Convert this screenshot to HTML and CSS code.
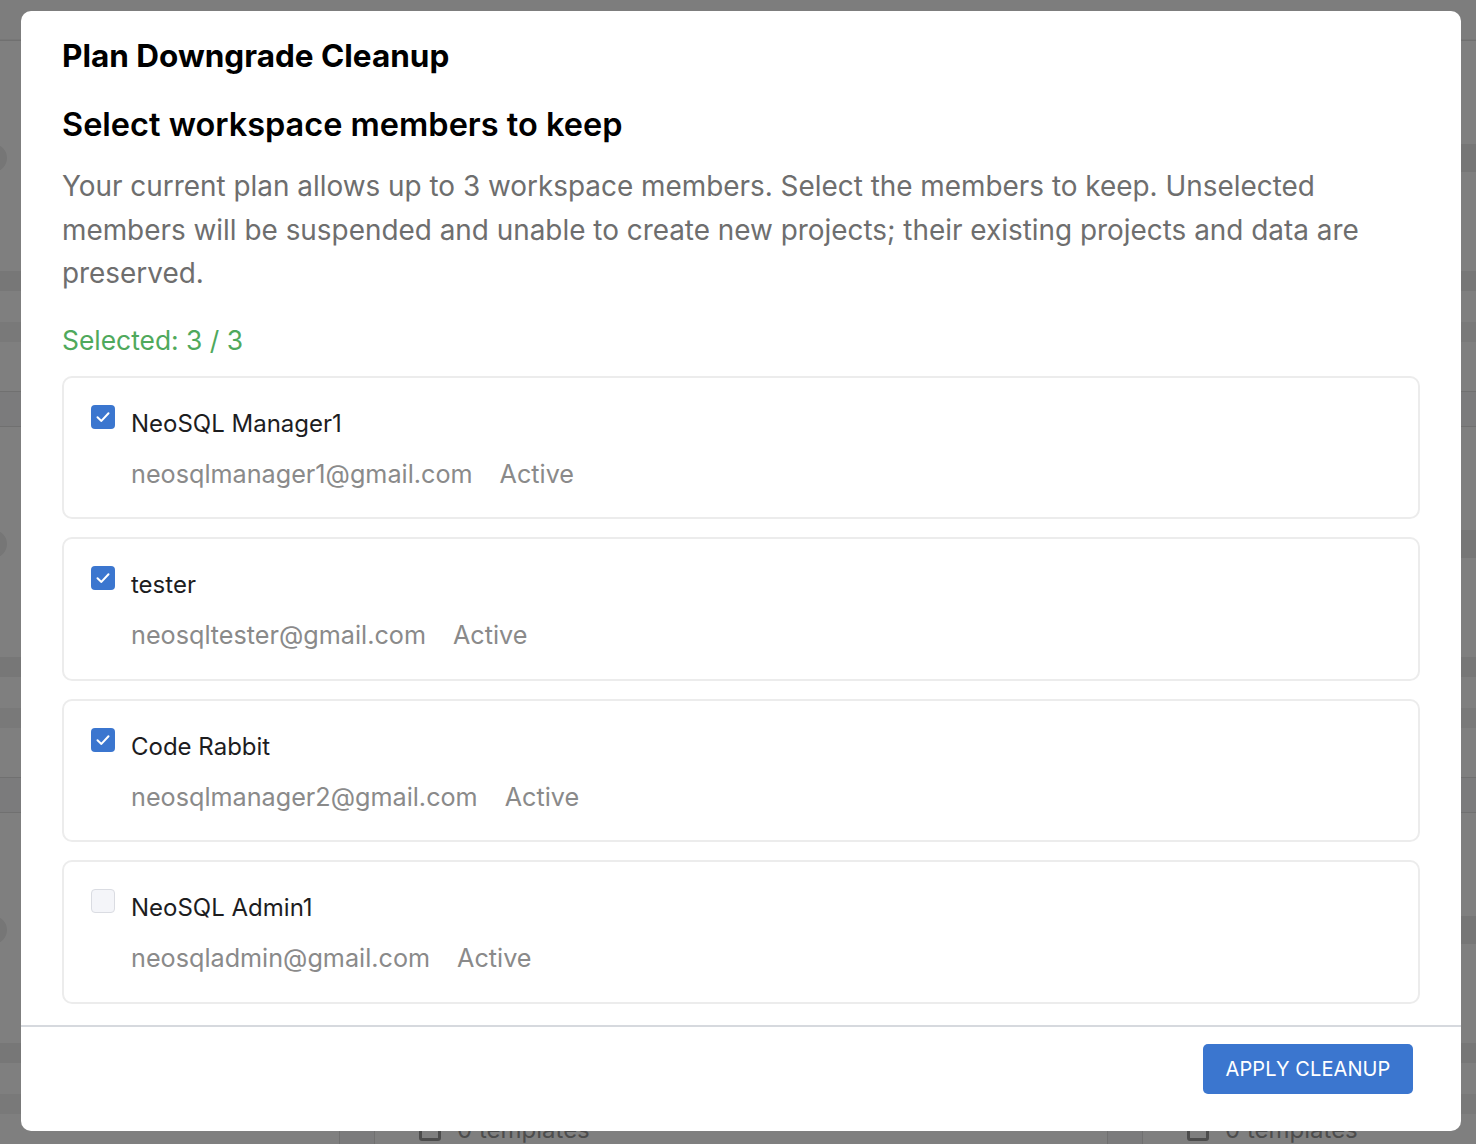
FILE: index.html
```html
<!DOCTYPE html>
<html lang="en">
<head>
    <meta charset="UTF-8">
    <meta name="viewport" content="width=device-width, initial-scale=1.0">
    <title>Plan Downgrade Cleanup</title>
    <link rel="stylesheet" href="styles.css">
</head>
<body>
    <!-- page behind the dialog -->
    <div class="app">
        <div class="app-header"></div>
        <div class="board">
            <div class="board-card"><div class="pill"></div><div class="bar"></div><div class="bar light"></div></div>
            <div class="board-card"><div class="pill"></div><div class="bar"></div><div class="bar light"></div></div>
            <div class="board-card"><div class="pill"></div><div class="bar"></div><div class="bar light"></div></div>
            <div class="board-card"><div class="pill"></div><div class="bar"></div><div class="bar light"></div></div>
            <div class="board-card"><div class="pill"></div><div class="bar"></div><div class="bar light"></div></div>
            <div class="board-card"><div class="pill"></div><div class="bar"></div><div class="bar light"></div></div>
            <div class="board-card"><div class="pill"></div><div class="bar"></div><div class="bar light"></div></div>
            <div class="board-card"><div class="pill"></div><div class="bar"></div><div class="bar light"></div><div class="count"><span class="count-icon"></span>0 templates</div></div>
            <div class="board-card"><div class="pill"></div><div class="bar"></div><div class="bar light"></div><div class="count"><span class="count-icon"></span>0 templates</div></div>
        </div>
    </div>

    <div class="backdrop"></div>

    <div class="modal" role="dialog">
        <div class="modal-body">
            <h1 class="modal-title">Plan Downgrade Cleanup</h1>
            <h2 class="section-title">Select workspace members to keep</h2>
            <p class="hint">Your current plan allows up to 3 workspace members. Select the members to keep. Unselected members will be suspended and unable to create new projects; their existing projects and data are preserved.</p>
            <div class="selected-count">Selected: 3 / 3</div>

            <div class="member-list">
                <label class="member">
                    <span class="check checked">
                        <svg viewBox="0 0 24 24" width="24" height="24"><path d="M6.5 12.3l3.9 3.6 7.1-7.6" fill="none" stroke="#fff" stroke-width="2" stroke-linecap="round" stroke-linejoin="round"/></svg>
                    </span>
                    <span class="member-info">
                        <span class="member-name">NeoSQL Manager1</span>
                        <span class="member-meta"><span>neosqlmanager1@gmail.com</span><span>Active</span></span>
                    </span>
                </label>
                <label class="member">
                    <span class="check checked">
                        <svg viewBox="0 0 24 24" width="24" height="24"><path d="M6.5 12.3l3.9 3.6 7.1-7.6" fill="none" stroke="#fff" stroke-width="2" stroke-linecap="round" stroke-linejoin="round"/></svg>
                    </span>
                    <span class="member-info">
                        <span class="member-name">tester</span>
                        <span class="member-meta"><span>neosqltester@gmail.com</span><span>Active</span></span>
                    </span>
                </label>
                <label class="member">
                    <span class="check checked">
                        <svg viewBox="0 0 24 24" width="24" height="24"><path d="M6.5 12.3l3.9 3.6 7.1-7.6" fill="none" stroke="#fff" stroke-width="2" stroke-linecap="round" stroke-linejoin="round"/></svg>
                    </span>
                    <span class="member-info">
                        <span class="member-name">Code Rabbit</span>
                        <span class="member-meta"><span>neosqlmanager2@gmail.com</span><span>Active</span></span>
                    </span>
                </label>
                <label class="member">
                    <span class="check"></span>
                    <span class="member-info">
                        <span class="member-name">NeoSQL Admin1</span>
                        <span class="member-meta"><span>neosqladmin@gmail.com</span><span>Active</span></span>
                    </span>
                </label>
            </div>
        </div>
        <div class="modal-footer">
            <button class="btn-primary" type="button">Apply Cleanup</button>
        </div>
    </div>
</body>
</html>
```

FILE: styles.css
```css
* {
  box-sizing: border-box;
}

body {
  margin: 0;
  font-family: Inter, "Noto Sans", sans-serif;
  color: #1d1d1f;
  background-color: #fff;
  overflow: hidden;
}

/* background page */
.app {
  height: 1144px;
  overflow: hidden;
}

.app-header {
  height: 40px;
  border-bottom: 1px solid #eee;
  background-color: #fafafa;
}

.board {
  display: grid;
  grid-template-columns: repeat(3, 734px);
  gap: 34px;
  margin-left: -394px;
  background-color: #f7f7f9;
}

.board-card {
  height: 352px;
  background-color: #fff;
  border: 1px solid #e0e0e0;
  padding: 103px 44px 0;
}

.pill {
  height: 28px;
  width: 356px;
  border-radius: 14px;
  background-color: #ececec;
}

.bar {
  height: 20px;
  margin: 99px -44px 0;
  background-color: #eee;
}

.bar.light {
  margin-top: 31px;
  background-color: #f3f3f3;
}

.count {
  display: flex;
  align-items: center;
  gap: 16px;
  margin-top: 1px;
  font-size: 24px;
  color: #999;
}

.count-icon {
  width: 22px;
  height: 22px;
  border: 3px solid #999;
  border-radius: 3px;
}

.backdrop {
  position: fixed;
  inset: 0;
  background-color: rgba(0, 0, 0, 0.5);
}

/* dialog */
.modal {
  position: fixed;
  left: 21px;
  top: 11px;
  width: 1440px;
  height: 1120px;
  display: flex;
  flex-direction: column;
  background-color: #fff;
  border-radius: 10px;
  overflow: hidden;
}

.modal-body {
  flex: 1;
  padding: 25px 41px 0;
  overflow: hidden;
}

.modal-title {
  margin: 0;
  font-size: 31.5px;
  line-height: 40px;
  font-weight: 700;
  color: #000;
}

.section-title {
  margin: 29px 0 0;
  font-size: 32.5px;
  line-height: 40px;
  font-weight: 600;
  color: #000;
}

.hint {
  margin: 20px 0 0;
  font-size: 27.9px;
  line-height: 43.5px;
  color: #6e6e6e;
}

.selected-count {
  margin-top: 26px;
  font-size: 26.4px;
  line-height: 36px;
  color: #4fa95c;
}

.member-list {
  display: flex;
  flex-direction: column;
  gap: 18px;
  margin-top: 18px;
}

.member {
  display: flex;
  align-items: flex-start;
  gap: 16px;
  padding: 27px 27px 26.5px;
  border: 2px solid #ececec;
  border-radius: 10px;
  cursor: pointer;
}

.check {
  flex: none;
  width: 24px;
  height: 24px;
  border-radius: 4px;
  border: 1px solid #dadce2;
  background-color: #f4f5f9;
}

.check.checked {
  border: none;
  background-color: #3b76cf;
}

.check svg {
  display: block;
}

.member-info {
  display: flex;
  flex-direction: column;
  gap: 14px;
}

.member-name {
  font-size: 24px;
  line-height: 38px;
  color: #1d1d1f;
}

.member-meta {
  display: flex;
  gap: 27px;
  font-size: 25.2px;
  line-height: 34px;
  color: #8a8a8a;
}

.modal-footer {
  display: flex;
  justify-content: flex-end;
  padding: 17px 48px 37px;
  border-top: 2px solid #d6d9de;
}

.btn-primary {
  height: 50px;
  width: 210px;
  border: none;
  border-radius: 5px;
  background-color: #3b76cf;
  color: #fff;
  font-family: Inter, "Noto Sans", sans-serif;
  font-size: 20px;
  letter-spacing: 0.1px;
  text-transform: uppercase;
  cursor: pointer;
}
```
